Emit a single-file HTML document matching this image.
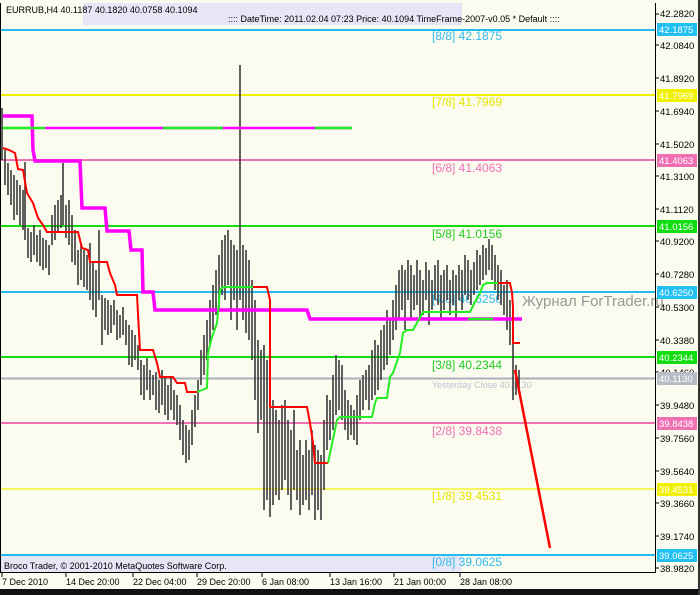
<!DOCTYPE html>
<html><head><meta charset="utf-8"><style>
body{margin:0;width:700px;height:595px;background:#fbfbf0;overflow:hidden;font-family:"Liberation Sans",sans-serif}
svg{display:block}
</style></head><body>
<svg width="700" height="595" xmlns="http://www.w3.org/2000/svg" font-family="Liberation Sans, sans-serif">
<rect width="700" height="595" fill="#fbfbf0"/>
<rect x="83" y="3" width="379" height="22" fill="#e6e6f7"/>
<rect x="0" y="555" width="462" height="17" fill="#e6e6f7"/>
<text x="6" y="13" font-size="9" fill="#000">EURRUB,H4  40.1187 40.1820 40.0758 40.1094</text>
<text x="228" y="22" font-size="9" fill="#000">:::: DateTime: 2011.02.04 07:23   Price: 40.1094   TimeFrame-2007-v0.05    *  Default  ::::</text>
<text x="4" y="569" font-size="9" fill="#000">Broco Trader, © 2001-2010 MetaQuotes Software Corp.</text>
<g stroke-width="2">
<line x1="0" y1="30" x2="655" y2="30" stroke="#22bbee"/>
<line x1="0" y1="95" x2="655" y2="95" stroke="#f0f000"/>
<line x1="0" y1="160" x2="655" y2="160" stroke="#f070b4"/>
<line x1="0" y1="226" x2="655" y2="226" stroke="#11dd11"/>
<line x1="0" y1="292" x2="655" y2="292" stroke="#22bbee"/>
<line x1="0" y1="357" x2="655" y2="357" stroke="#11dd11"/>
<line x1="0" y1="378.5" x2="655" y2="378.5" stroke="#aab0bb"/>
<line x1="0" y1="423" x2="655" y2="423" stroke="#f070b4"/>
<line x1="0" y1="489" x2="655" y2="489" stroke="#f5f560"/>
<line x1="0" y1="555" x2="655" y2="555" stroke="#22bbee"/>
</g>
<g font-size="12">
<text x="432" y="40" fill="#33bbee">[8/8]    42.1875</text>
<text x="432" y="106" fill="#e6e600">[7/8]    41.7969</text>
<text x="432" y="172" fill="#f070b4">[6/8]    41.4063</text>
<text x="432" y="238" fill="#22cc22">[5/8]    41.0156</text>
<text x="432" y="303" fill="#33bbee">[4/8]    40.6250</text>
<text x="432" y="369" fill="#22cc22">[3/8]    40.2344</text>
<text x="432" y="388" font-size="9" fill="#c0c4cc">Yesterday Close  40.1130</text>
<text x="432" y="435" fill="#f070b4">[2/8]    39.8438</text>
<text x="432" y="500" fill="#e6e600">[1/8]    39.4531</text>
<text x="432" y="566" fill="#33bbee">[0/8]    39.0625</text>
</g>
<path stroke="#3a3a3a" stroke-width="1.6" fill="none" d="M2 108V160M5 150V185M8 163V195M11 170V205M14 175V220M17 180V215M20 185V225M23 190V230M25 162V240M28 228V258M31 232V262M34 225V255M37 235V262M40 230V266M43 238V270M46 240V268M49 245V275M52 215V245M55 205V240M58 200V232M61 195V228M63 163V225M66 205V238M69 200V245M72 215V262M75 230V265M78 250V285M81 245V280M84 250V287M87 255V290M90 243V300M93 262V310M96 270V317M99 230V300M102 295V345M105 298V330M108 300V335M111 305V333M114 300V325M117 310V340M120 315V338M123 307V335M126 320V345M129 325V365M132 330V367M135 335V360M138 345V370M141 360V395M144 365V400M147 358V390M150 370V400M153 375V395M156 372V410M159 380V413M162 370V405M165 378V415M168 385V420M171 377V410M174 390V420M177 395V425M180 405V440M183 420V455M186 425V463M189 430V460M192 410V445M195 395V427M198 380V410M201 350V385M204 335V375M207 320V360M210 300V345M213 285V330M216 270V315M219 255V310M222 240V295M225 235V300M228 230V285M231 240V320M234 245V300M237 250V330M240 65V300M243 245V320M246 250V333M249 260V340M252 280V360M255 300V400M258 340V433M261 350V420M264 345V510M267 360V500M270 380V517M273 400V505M276 410V495M279 420V500M282 405V490M285 400V480M288 420V495M291 430V510M294 410V490M297 450V500M300 440V515M303 455V505M306 440V500M309 450V510M312 430V495M315 445V520M318 450V510M321 455V520M324 420V490M327 395V450M330 400V440M333 375V430M336 355V415M339 360V410M342 365V420M345 390V430M348 400V440M351 405V435M354 410V440M357 395V445M360 380V420M363 375V410M366 370V400M369 365V410M372 350V400M375 340V395M378 345V390M381 330V380M384 325V370M387 310V365M390 320V355M393 300V340M396 285V330M399 270V320M402 265V310M405 270V330M408 260V300M411 265V320M414 275V310M417 260V305M420 270V320M423 280V315M426 262V300M429 270V325M432 280V310M435 265V300M438 260V305M441 275V320M444 270V310M447 265V300M450 280V315M453 270V305M456 275V320M459 265V300M462 270V310M465 255V295M468 260V300M471 270V305M474 262V295M477 250V290M480 255V285M483 245V280M486 248V275M489 239V270M492 245V280M495 255V290M498 265V300M501 270V305M504 285V315M507 280V330M510 300V345M513 325V400M516 365V395M519 370V390"/>
<g fill="none" stroke-width="3.5">
<path stroke="#ff00ff" d="M3 116H32L33 150L35 161H80L82 208H105L107 231H129L131 250H142L143 292H153L155 310H307L310 319H522"/>
<path stroke="#ff00ff" stroke-width="2.5" d="M45 128H352"/>
<path stroke="#22ee22" stroke-width="2.5" d="M3 128H45M163 128H223M315 128H352M468 319H493"/>
</g>
<g fill="none" stroke-width="2">
<path stroke="#ff0000" d="M3 148L9 150L15 153L18 169L23 170L27 193L33 203L38 218L43 225L47 232H78L82 248L88 250L90 262H107L110 273L115 285L117 295H137L140 350H153L157 363L160 377H173L177 383H185L187 392H197M253 287H267L270 300V407H307L310 423L313 443L315 463H328M498 283H510L512 293L513 307V343H520"/>
<path stroke="#22ee22" d="M197 392L207 388L208 353L212 337L217 323L220 290L223 287H253M328 463L337 420L340 417H372L375 403L377 398H387L390 377L393 373L400 353L403 333L407 330H413L423 312H470L475 302L480 293L483 285L487 283H498"/>
<path stroke="#ff0000" stroke-width="2.5" d="M515 370L550 548"/>
</g>
<text x="522" y="306" font-size="15" fill="#999">Журнал ForTrader.ru</text>
<path stroke="#000" stroke-width="1" fill="none" d="M655.5 3V572.5H0M0.5 3V572"/>
<g stroke="#000" stroke-width="1"><path d="M2 572V577M66 572V577M133 572V577M197 572V577M262 572V577M330 572V577M394 572V577M460 572V577"/></g>
<g font-size="9" fill="#000">
<text x="2" y="585">7 Dec 2010</text><text x="66" y="585">14 Dec 20:00</text><text x="133" y="585">22 Dec 04:00</text><text x="197" y="585">29 Dec 20:00</text><text x="262" y="585">6 Jan 08:00</text><text x="330" y="585">13 Jan 16:00</text><text x="394" y="585">21 Jan 00:00</text><text x="460" y="585">28 Jan 08:00</text>
</g>
<g font-size="9.5" fill="#000">
<text x="660" y="17">42.2820</text><text x="660" y="49">42.0840</text><text x="660" y="82">41.8920</text><text x="660" y="115">41.6940</text><text x="660" y="148">41.5020</text><text x="660" y="180">41.3100</text><text x="660" y="213">41.1120</text><text x="660" y="245">40.9200</text><text x="660" y="278">40.7280</text><text x="660" y="311">40.5300</text><text x="660" y="344">40.3380</text><text x="660" y="376">40.1460</text><text x="660" y="409">39.9480</text><text x="660" y="442">39.7560</text><text x="660" y="475">39.5640</text><text x="660" y="507">39.3660</text><text x="660" y="540">39.1740</text><text x="660" y="572">38.9820</text>
</g>
<g stroke="#000"><path d="M655 14H659M655 45H659M655 78H659M655 111H659M655 144H659M655 176H659M655 209H659M655 241H659M655 274H659M655 307H659M655 340H659M655 372H659M655 405H659M655 438H659M655 471H659M655 503H659M655 536H659M655 568H659"/></g>
<g font-size="9.5" fill="#fff">
<rect x="657" y="23" width="40" height="13" fill="#22c0f2"/><text x="659" y="33">42.1875</text>
<rect x="657" y="89" width="40" height="13" fill="#f0f000"/><text x="659" y="99">41.7969</text>
<rect x="657" y="154" width="40" height="13" fill="#f070b4"/><text x="659" y="164">41.4063</text>
<rect x="657" y="220" width="40" height="13" fill="#11dd11"/><text x="659" y="230">41.0156</text>
<rect x="657" y="286" width="40" height="13" fill="#22c0f2"/><text x="659" y="296">40.6250</text>
<rect x="657" y="351" width="40" height="13" fill="#11dd11"/><text x="659" y="361">40.2344</text>
<rect x="657" y="372" width="40" height="13" fill="#b8bcc4"/><text x="659" y="382">40.1130</text>
<rect x="657" y="417" width="40" height="13" fill="#f070b4"/><text x="659" y="427">39.8438</text>
<rect x="657" y="483" width="40" height="13" fill="#f0f000"/><text x="659" y="493">39.4531</text>
<rect x="657" y="549" width="40" height="13" fill="#22c0f2"/><text x="659" y="559">39.0625</text>
</g>
<rect x="0" y="589" width="700" height="6" fill="#111"/>
<rect x="698" y="0" width="2" height="595" fill="#333"/>
</svg>
</body></html>
